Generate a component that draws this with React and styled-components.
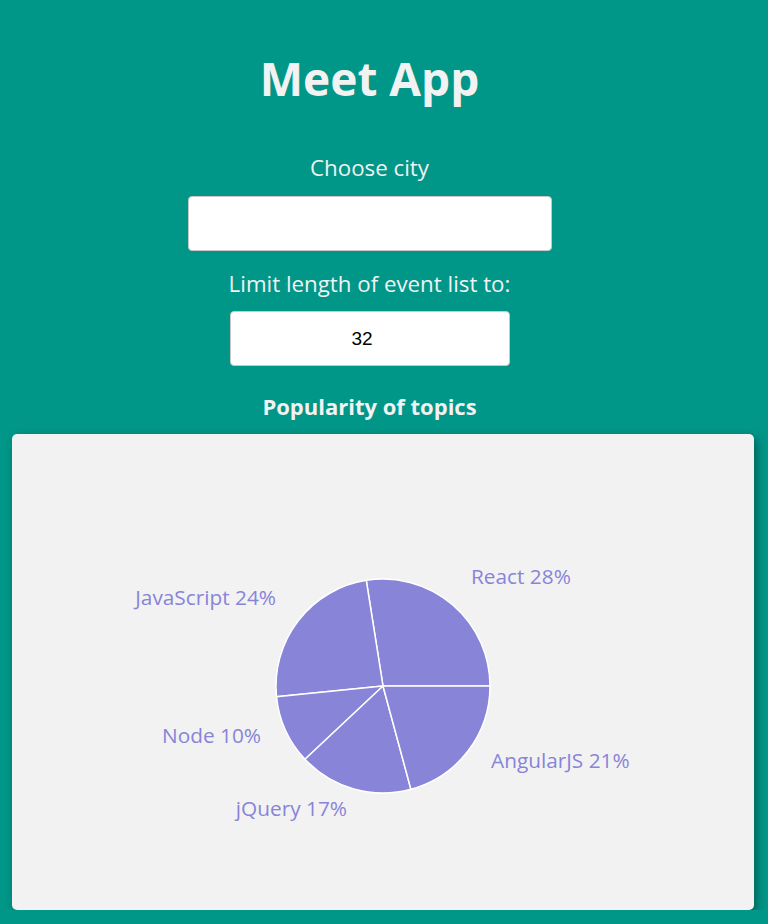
import React from 'react';
import styled, { createGlobalStyle } from 'styled-components';

const GlobalStyle = createGlobalStyle`
  body {
    margin: 0;
    background: #009688;
    font-family: "Open Sans", "Noto Sans", sans-serif;
  }
`;

const Page = styled.div`
  display: flex;
  flex-direction: column;
  align-items: center;
  padding-top: 51px;
  color: #f2f2f2;
`;

const Form = styled.div`
  display: flex;
  flex-direction: column;
  align-items: center;
  padding-right: 29px;
`;

const Title = styled.h1`
  margin: 0;
  font-size: 46px;
  line-height: 55px;
  font-weight: 700;
`;

const Label = styled.label`
  display: block;
  margin-top: ${(p) => p.$top}px;
  font-size: 22.3px;
  line-height: 28px;
`;

const Input = styled.input`
  box-sizing: border-box;
  width: ${(p) => p.$width}px;
  height: 55px;
  margin-top: ${(p) => p.$top}px;
  border: 1px solid #c8c8c8;
  border-radius: 4px;
  background: #fff;
  font-family: "Liberation Sans", Arial, sans-serif;
  font-size: 19px;
  text-align: center;
  outline: none;
`;

const ChartTitle = styled.h4`
  margin: 26px 0 0;
  font-size: 22px;
  line-height: 28px;
  font-weight: 700;
`;

const Card = styled.div`
  align-self: stretch;
  margin: 14px 14px 0 12px;
  height: 476px;
  background: #f2f2f2;
  border-radius: 5px;
  box-shadow: 3px 4px 10px rgba(0, 0, 0, 0.35);
`;

const PieLabel = styled.text`
  font-family: "Open Sans", "Noto Sans", sans-serif;
  font-size: 20.8px;
  fill: #8884d8;
`;

const data = [
  { name: 'React', value: 0.275, label: 'React 28%', x: 459, y: 142, anchor: 'start' },
  { name: 'JavaScript', value: 0.241, label: 'JavaScript 24%', x: 264, y: 163, anchor: 'end' },
  { name: 'Node', value: 0.104, label: 'Node 10%', x: 249, y: 301, anchor: 'end' },
  { name: 'jQuery', value: 0.172, label: 'jQuery 17%', x: 335, y: 374, anchor: 'end' },
  { name: 'AngularJS', value: 0.208, label: 'AngularJS 21%', x: 479, y: 326, anchor: 'start' },
];

const CX = 371;
const CY = 252;
const R = 107;

function point(deg) {
  const a = (deg * Math.PI) / 180;
  return [CX + R * Math.cos(a), CY - R * Math.sin(a)];
}

function TopicsPie() {
  let start = 0;
  const slices = data.map((d) => {
    const end = start + d.value * 360;
    const [x0, y0] = point(start);
    const [x1, y1] = point(end);
    const large = end - start > 180 ? 1 : 0;
    const path = `M${CX},${CY} L${x0},${y0} A${R},${R} 0 ${large} 0 ${x1},${y1} Z`;
    start = end;
    return <path key={d.name} d={path} fill="#8884d8" stroke="#fff" strokeWidth="1.5" />;
  });

  return (
    <svg width="100%" height="476" viewBox="0 0 742 476">
      {slices}
      {data.map((d) => (
        <PieLabel key={d.name} x={d.x} y={d.y} textAnchor={d.anchor} dominantBaseline="central">
          {d.label}
        </PieLabel>
      ))}
    </svg>
  );
}

export default function App() {
  return (
    <>
      <GlobalStyle />
      <Page>
        <Form>
          <Title>Meet App</Title>
          <Label $top={48}>Choose city</Label>
          <Input $width={364} $top={14} type="text" />
          <Label $top={19}>Limit length of event list to:</Label>
          <Input $width={280} $top={13} type="number" defaultValue={32} />
          <ChartTitle>Popularity of topics</ChartTitle>
        </Form>
        <Card>
          <TopicsPie />
        </Card>
      </Page>
    </>
  );
}
